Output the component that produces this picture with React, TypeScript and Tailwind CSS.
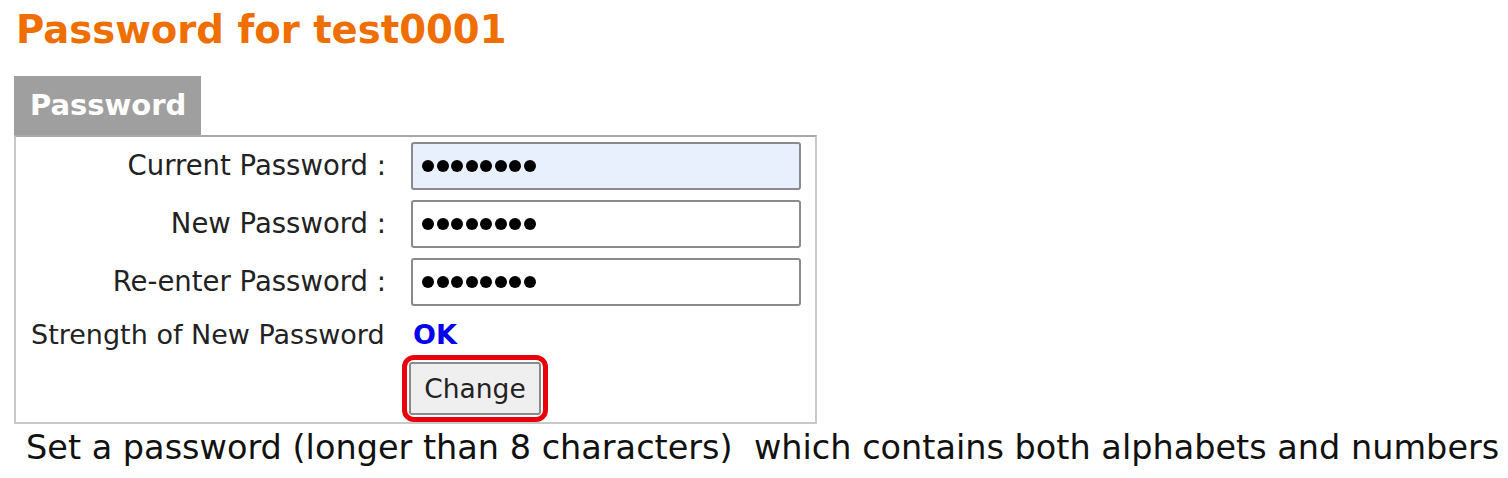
const fields = [
  { label: 'Current Password :', filled: true },
  { label: 'New Password :', filled: false },
  { label: 'Re-enter Password :', filled: false },
]

function Dots() {
  return (
    <div className="flex items-center gap-[2.5px]">
      {Array.from({ length: 8 }).map((_, i) => (
        <span key={i} className="block h-[12px] w-[12px] rounded-full bg-black" />
      ))}
    </div>
  )
}

export default function App() {
  return (
    <div className="h-[478px] w-[1508px] bg-white text-black" style={{ fontFamily: '"DejaVu Sans", sans-serif' }}>
      <h1 className="pl-[16px] pt-[4px] text-[38.6px] font-bold leading-[52px] text-[#ee6e00]">Password for test0001</h1>

      <div className="ml-[14px] mt-[20px] w-[803px]">
        <div className="flex h-[59px] w-[187px] items-center bg-[#9f9f9f] pl-[16px]">
          <span className="text-[29px] font-bold text-white">Password</span>
        </div>

        <div className="border-2 border-t-[#a8a8a8] border-x-[#c9c9c9] border-b-[#c9c9c9] pt-[5px]">
          {fields.map((f, i) => (
            <div key={f.label} className={`flex items-center ${i > 0 ? 'mt-[10px]' : ''}`}>
              <div className="w-[370px] text-right text-[27.5px] leading-none text-[#222]">{f.label}</div>
              <div
                className={`ml-[25px] flex h-[48px] w-[390px] items-center rounded-[3px] border-2 border-[#8a8a8a] pl-[9px] ${
                  f.filled ? 'bg-[#e8f0fe]' : 'bg-white'
                }`}
              >
                <Dots />
              </div>
            </div>
          ))}

          <div className="mt-[8px] flex h-[41px] items-center">
            <div className="w-[370px] pl-[15px] text-[27px] leading-none text-[#222]">Strength of New Password</div>
            <div className="ml-[27px] text-[27px] font-bold leading-none text-[#0000ee]">OK</div>
          </div>

          <div className="flex">
            <div className="ml-[386px] rounded-[12px] border-[5px] border-[#e8000b] p-[2px]">
              <button className="flex h-[53px] w-[132px] items-center justify-center rounded-[3px] border-2 border-[#8a8a8a] bg-[#efefef] text-[26.5px] text-[#222]">
                Change
              </button>
            </div>
          </div>
        </div>
      </div>

      <p className="whitespace-pre pl-[26px] pt-[4px] text-[33.5px] leading-[40px] text-[#111]">
        Set a password (longer than 8 characters)  which contains both alphabets and numbers
      </p>
    </div>
  )
}
